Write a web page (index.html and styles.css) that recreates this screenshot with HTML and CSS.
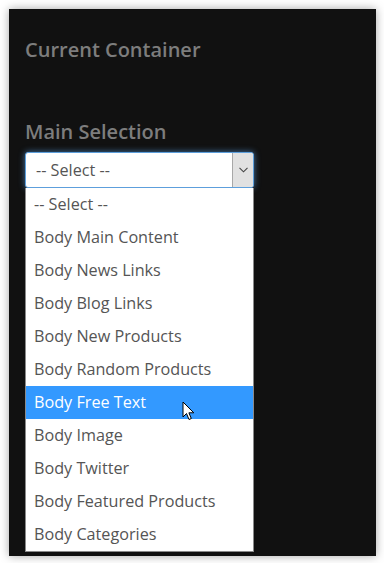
FILE: index.html
```html
<!DOCTYPE html>
<html lang="en">
<head>
  <meta charset="UTF-8">
  <title>Current Container</title>
  <link rel="stylesheet" href="styles.css">
</head>
<body>
  <div class="panel">
    <h2 class="title">Current Container</h2>

    <label class="field-label">Main Selection</label>
    <div class="select-box">
      <span class="select-value">-- Select --</span>
      <span class="select-arrow">
        <svg width="9" height="6" viewBox="0 0 9 6"><path d="M0.5 0.8 L4.5 4.8 L8.5 0.8" fill="none" stroke="#444" stroke-width="1.1"/></svg>
      </span>
    </div>

    <!-- open dropdown list -->
    <ul class="options">
      <li>-- Select --</li>
      <li>Body Main Content</li>
      <li>Body News Links</li>
      <li>Body Blog Links</li>
      <li>Body New Products</li>
      <li>Body Random Products</li>
      <li class="active">Body Free Text
        <svg class="cursor" width="13" height="20" viewBox="0 0 13 20">
          <path d="M1 1 L1 16 L4.5 12.5 L7 18.5 L9.3 17.5 L6.9 11.8 L11.8 11.8 Z" fill="#fff" stroke="#000" stroke-width="1" stroke-linejoin="round"/>
        </svg>
      </li>
      <li>Body Image</li>
      <li>Body Twitter</li>
      <li>Body Featured Products</li>
      <li>Body Categories</li>
    </ul>
  </div>
</body>
</html>
```

FILE: styles.css
```css
body {
  margin: 0;
  background-color: #fff;
  font-family: "Open Sans", Arial, sans-serif;
}

/* dark card */
.panel {
  margin: 9px;
  width: 367px;
  height: 547px;
  box-sizing: border-box;
  padding: 29px 16px 0;
  background-color: #111;
  box-shadow: 0 0 9px rgba(0, 0, 0, 0.35);
}

.title {
  margin: 0 0 58px;
  font-size: 20px;
  font-weight: 600;
  line-height: 24px;
  color: #7d7d7d;
}

.field-label {
  display: block;
  margin-bottom: 8px;
  font-size: 20px;
  font-weight: 600;
  line-height: 24px;
  color: #7d7d7d;
}

/* closed select */
.select-box {
  display: flex;
  width: 229px;
  height: 36px;
  box-sizing: border-box;
  border: 1px solid #5d9fdc;
  border-radius: 3px;
  background-color: #fff;
  box-shadow: 0 0 6px rgba(90, 160, 230, 0.7);
  overflow: hidden;
}

.select-value {
  flex: 1;
  padding-left: 10px;
  font-size: 16.2px;
  line-height: 34px;
  color: #555;
}

.select-arrow {
  width: 20px;
  display: flex;
  align-items: center;
  justify-content: center;
  background-color: #e1e1e1;
  border-left: 1px solid #a8a8a8;
}

/* dropdown list */
.options {
  list-style: none;
  margin: 0;
  padding: 0;
  width: 229px;
  box-sizing: border-box;
  border: 1px solid #8a8a8a;
  border-top: none;
  background-color: #fff;
}

.options li {
  position: relative;
  height: 33px;
  padding-left: 8px;
  font-size: 16.2px;
  line-height: 33px;
  color: #555;
}

.options li.active {
  background-color: #3399ff;
  color: #fff;
}

.cursor {
  position: absolute;
  left: 156px;
  top: 15px;
}
```
